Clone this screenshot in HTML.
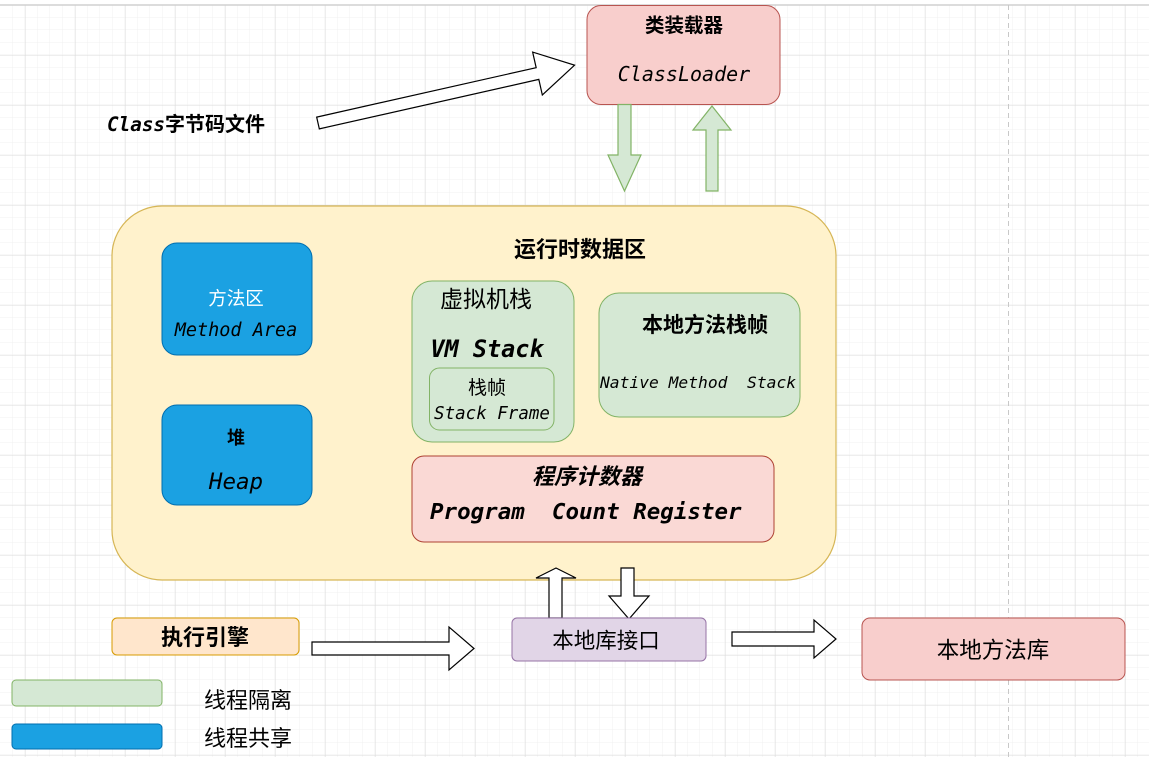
<!DOCTYPE html>
<html><head><meta charset="utf-8"><style>
html,body{margin:0;padding:0;background:#fff;}
svg{display:block;}
text{font-family:"Liberation Sans","Noto Sans CJK SC",sans-serif;}
.m{font-family:"DejaVu Sans Mono","Liberation Mono","Noto Sans CJK SC",monospace;font-style:italic;}
</style></head><body>
<svg width="1149" height="757" viewBox="0 0 1149 757" xmlns="http://www.w3.org/2000/svg">
<defs>
<pattern id="minor" x="0" y="5" width="12.5" height="12.5" patternUnits="userSpaceOnUse">
<path d="M12.5 0V12.5M0 12.5H12.5" stroke="#f0f0f0" stroke-width="1" fill="none"/></pattern>
<pattern id="major" x="25" y="5" width="50" height="50" patternUnits="userSpaceOnUse">
<path d="M0 0V50M0 0H50" stroke="#dcdcdc" stroke-width="1" fill="none"/></pattern>
</defs>
<rect width="1149" height="757" fill="url(#minor)"/>
<rect width="1149" height="757" fill="url(#major)"/>
<rect x="0" y="0" width="1149" height="5" fill="#fff"/>
<line x1="0" y1="5" x2="1149" y2="5" stroke="#d0d0d0" stroke-width="1.5"/>
<line x1="1008.5" y1="5" x2="1008.5" y2="757" stroke="#c8c8c8" stroke-dasharray="5,4"/>

<!-- ClassLoader -->
<rect x="587" y="5.5" width="193" height="99" rx="14" fill="#f8cecc" stroke="#b85450"/>
<text x="684" y="32" text-anchor="middle" font-size="19.5" font-weight="bold">类装载器</text>
<text x="684" y="81" text-anchor="middle" font-size="20" class="m">ClassLoader</text>

<!-- Class text + arrow -->
<text x="107" y="131" font-size="20" font-weight="bold"><tspan class="m" font-size="19.3">Class</tspan>字节码文件</text>
<g transform="translate(318,123) rotate(-12.7)">
<polygon points="0,-6 225,-6 225,-22 263,0 225,22 225,6 0,6" fill="#fff" stroke="#000" stroke-width="1.2"/>
</g>

<!-- green arrows -->
<polygon points="618,104.5 631,104.5 631,155 641,155 624.5,191 608,155 618,155" fill="#d5e8d4" stroke="#82b366" stroke-width="1.2"/>
<polygon points="706,191 718,191 718,130 731,130 712,106 693,130 706,130" fill="#d5e8d4" stroke="#82b366" stroke-width="1.2"/>

<!-- runtime data area -->
<rect x="112" y="206" width="724" height="374" rx="50" fill="#fff2cc" stroke="#d6b656" stroke-width="1.2"/>
<text x="580" y="257" text-anchor="middle" font-size="22" font-weight="bold">运行时数据区</text>

<rect x="162" y="243" width="150" height="112" rx="15" fill="#1ba1e2" stroke="#006eaf"/>
<text x="236" y="305" text-anchor="middle" font-size="18.5" fill="#fff">方法区</text>
<text x="236" y="336" text-anchor="middle" font-size="18.5" class="m">Method Area</text>

<rect x="162" y="405" width="150" height="100" rx="15" fill="#1ba1e2" stroke="#006eaf"/>
<text x="236" y="444" text-anchor="middle" font-size="18" font-weight="bold">堆</text>
<text x="236" y="489" text-anchor="middle" font-size="22.5" class="m">Heap</text>

<rect x="412" y="281" width="162" height="161" rx="20" fill="#d5e8d4" stroke="#82b366"/>
<text x="486" y="307" text-anchor="middle" font-size="23">虚拟机栈</text>
<text x="487" y="357" text-anchor="middle" font-size="23.5" font-weight="bold" class="m">VM Stack</text>
<rect x="429.5" y="368" width="124.5" height="62" rx="10" fill="#d5e8d4" stroke="#82b366"/>
<text x="487" y="394" text-anchor="middle" font-size="19">栈帧</text>
<text x="492" y="419" text-anchor="middle" font-size="17.5" class="m">Stack Frame</text>

<rect x="599" y="293" width="201" height="124" rx="20" fill="#d5e8d4" stroke="#82b366"/>
<text x="705" y="332" text-anchor="middle" font-size="21" font-weight="bold">本地方法栈帧</text>
<text x="600" y="388" font-size="16.3" class="m" xml:space="preserve">Native Method  Stack</text>

<rect x="412" y="456" width="362" height="86" rx="12" fill="#fad9d5" stroke="#ae4132"/>
<text x="587" y="484" text-anchor="middle" font-size="22" font-weight="bold" font-style="italic">程序计数器</text>
<text x="430" y="519" font-size="22.5" font-weight="bold" class="m" xml:space="preserve">Program  Count Register</text>

<!-- vertical hollow arrows -->
<polygon points="549,618 562,618 562,578 576,578 556,568 536,578 549,578" fill="#fff" stroke="#000" stroke-width="1.2"/>
<polygon points="621,568 634,568 634,596 649,596 629,619 609,596 621,596" fill="#fff" stroke="#000" stroke-width="1.2"/>

<!-- bottom row -->
<rect x="112" y="618" width="187" height="37" rx="5" fill="#ffe6cc" stroke="#d79b00"/>
<text x="205" y="645" text-anchor="middle" font-size="22" font-weight="bold">执行引擎</text>
<polygon points="312,642 449,642 449,627 474,648.5 449,670 449,655 312,655" fill="#fff" stroke="#000" stroke-width="1.2"/>

<rect x="512" y="618" width="194" height="43" rx="5" fill="#e1d5e7" stroke="#9673a6"/>
<text x="606" y="648" text-anchor="middle" font-size="21.5">本地库接口</text>
<polygon points="732,632 814,632 814,620 836,639 814,658 814,646 732,646" fill="#fff" stroke="#000" stroke-width="1.2"/>

<rect x="862" y="618" width="263" height="62" rx="8" fill="#f8cecc" stroke="#b85450"/>
<text x="993" y="658" text-anchor="middle" font-size="22.5">本地方法库</text>

<!-- legend -->
<rect x="12" y="680" width="150" height="26" rx="4" fill="#d5e8d4" stroke="#82b366"/>
<text x="204" y="708" font-size="22">线程隔离</text>
<rect x="12" y="724" width="150" height="25" rx="4" fill="#1ba1e2" stroke="#006eaf"/>
<text x="204" y="746" font-size="22">线程共享</text>
</svg>
</body></html>
